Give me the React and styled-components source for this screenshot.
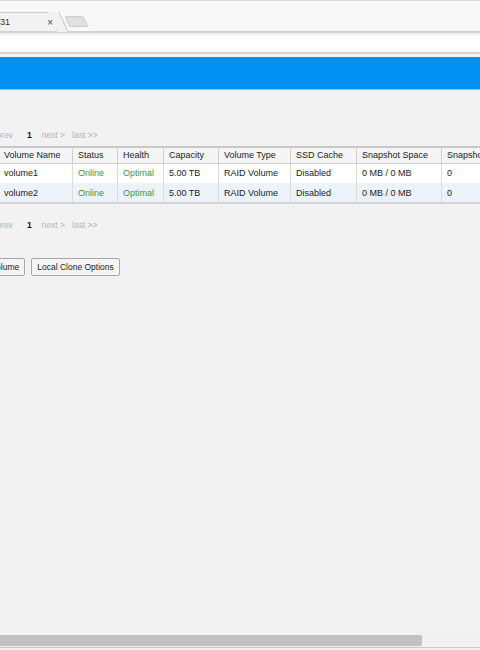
import React from 'react';
import styled, { createGlobalStyle } from 'styled-components';

const GlobalStyle = createGlobalStyle`
  html, body {
    margin: 0;
    padding: 0;
    background: #f2f2f2;
  }
  body {
    font-family: 'Liberation Sans', Arial, sans-serif;
  }
`;

const Page = styled.div`
  display: flex;
  flex-direction: column;
  width: 480px;
  height: 650px;
  overflow: hidden;
  background: #f2f2f2;
`;

const TabStrip = styled.div`
  display: flex;
  align-items: flex-end;
  height: 30px;
  background: #f8f8f8;
  border-top: 1px solid #dcdcdc;
  border-bottom: 2px solid #d2d2d2;
`;

const Tab = styled.div`
  position: relative;
  display: flex;
  align-items: center;
  justify-content: space-between;
  width: 59px;
  height: 19px;
  padding: 0 6px 0 0;
  box-sizing: border-box;
  background: #f2f2f2;
  border-top: 1px solid #cfcfcf;
  font-size: 9px;
  color: #333;
  &::after {
    content: '';
    position: absolute;
    right: -5px;
    top: -1px;
    width: 10px;
    height: 20px;
    background: #f2f2f2;
    border-right: 1px solid #c4c4c4;
    transform: skewX(25deg);
  }
`;

const TabClose = styled.span`
  font-size: 10px;
  color: #444;
`;

const NewTab = styled.div`
  width: 17px;
  height: 9px;
  margin: 0 0 4px 8px;
  background: #e0e0e0;
  border: 1px solid #cdcdcd;
  border-radius: 2px 2px 0 0;
  transform: skewX(25deg);
`;

const Toolbar = styled.div`
  height: 17px;
  background: #ffffff;
  border-top: 2px solid #efefef;
  border-bottom: 2px solid #d9d4d9;
`;

const Spacer = styled.div`
  height: 3px;
  background: #f4f4f4;
`;

const Banner = styled.div`
  height: 32px;
  background: #0290f5;
  border-bottom: 1px solid #86c6f6;
`;

const Content = styled.div`
  flex: 1;
  overflow: hidden;
  padding-top: 39px;
`;

const Pager = styled.div`
  display: flex;
  gap: 7px;
  align-items: center;
  height: 12px;
  margin: ${(p) => (p.bottom ? '15px 0 0 -11px' : '0 0 0 -11px')};
  font-size: 8.5px;
  color: #b4b4b4;
  white-space: nowrap;
`;

const PageNum = styled.span`
  color: #111;
  font-weight: bold;
  margin: 0 3px 0 7px;
`;

const Table = styled.table`
  margin: 5px 0 0 -2px;
  border-collapse: collapse;
  font-size: 9px;
  color: #222;
  white-space: nowrap;
  border-bottom: 2px solid #d4d4d4;
`;

const HeadCell = styled.th`
  height: 16px;
  padding: 0 5px;
  text-align: left;
  font-weight: normal;
  background: #f5f5f5;
  border: 1px solid #cfcfcf;
  border-top: 2px solid #c8c8c8;
  width: ${(p) => p.w}px;
  min-width: ${(p) => p.w}px;
  max-width: ${(p) => p.w}px;
  box-sizing: border-box;
  overflow: hidden;
`;

const Row = styled.tr`
  background: ${(p) => (p.alt ? '#edf3fb' : '#ffffff')};
`;

const Cell = styled.td`
  height: 20px;
  padding: 0 5px;
  border-left: 1px solid #dcdcdc;
  border-right: 1px solid #dcdcdc;
  color: ${(p) => (p.ok ? '#3b9a3b' : '#222')};
  box-sizing: border-box;
`;

const Buttons = styled.div`
  display: flex;
  gap: 6px;
  margin: 27px 0 0 -43px;
`;

const Button = styled.button`
  height: 18px;
  padding: 0 5px;
  font-family: 'Liberation Sans', Arial, sans-serif;
  font-size: 8.5px;
  color: #222;
  background: #f5f5f5;
  border: 1px solid #a8a8a8;
  border-radius: 2px;
  white-space: nowrap;
`;

const ScrollTrack = styled.div`
  height: 12px;
  padding-top: 1px;
  background: #f1f1f1;
  border-bottom: 1px solid #c9c9c9;
  margin-bottom: 2px;
`;

const ScrollThumb = styled.div`
  width: 422px;
  height: 11px;
  background: #c1c1c1;
  border-radius: 0 2px 2px 0;
`;

const columns = [
  ['Volume Name', 74],
  ['Status', 45],
  ['Health', 46],
  ['Capacity', 55],
  ['Volume Type', 72],
  ['SSD Cache', 66],
  ['Snapshot Space', 85],
  ['Snapshots', 70],
];

const volumes = [
  { name: 'volume1' },
  { name: 'volume2' },
];

const Pagination = ({ bottom }) => (
  <Pager bottom={bottom}>
    <span>&lt; prev</span>
    <PageNum>1</PageNum>
    <span>next &gt;</span>
    <span>last &gt;&gt;</span>
  </Pager>
);

const App = () => (
  <Page>
    <GlobalStyle />
    <TabStrip>
      <Tab>
        <span>31</span>
        <TabClose>×</TabClose>
      </Tab>
      <NewTab />
    </TabStrip>
    <Toolbar />
    <Spacer />
    <Banner />
    <Content>
      <Pagination />
      <Table>
        <thead>
          <tr>
            {columns.map(([label, w]) => (
              <HeadCell key={label} w={w}>
                {label}
              </HeadCell>
            ))}
          </tr>
        </thead>
        <tbody>
          {volumes.map((v, i) => (
            <Row key={v.name} alt={i % 2 === 1}>
              <Cell>{v.name}</Cell>
              <Cell ok>Online</Cell>
              <Cell ok>Optimal</Cell>
              <Cell>5.00 TB</Cell>
              <Cell>RAID Volume</Cell>
              <Cell>Disabled</Cell>
              <Cell>0 MB / 0 MB</Cell>
              <Cell>0</Cell>
            </Row>
          ))}
        </tbody>
      </Table>
      <Pagination bottom />
      <Buttons>
        <Button>Create Volume</Button>
        <Button>Local Clone Options</Button>
      </Buttons>
    </Content>
    <ScrollTrack>
      <ScrollThumb />
    </ScrollTrack>
  </Page>
);

export default App;
